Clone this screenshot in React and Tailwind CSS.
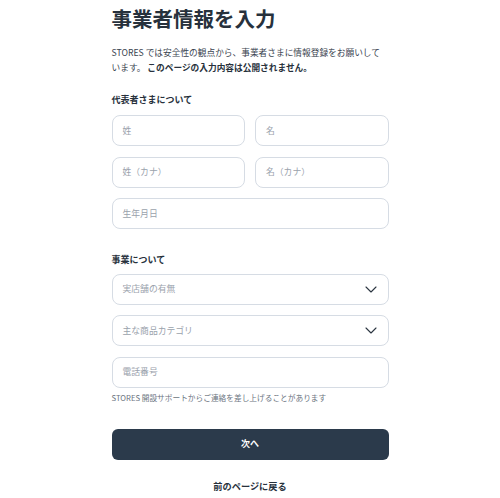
import React from "react";

const font = { fontFamily: '"Noto Sans CJK JP", "Noto Sans", sans-serif' };

function Field({ placeholder, className = "" }) {
  return (
    <div
      className={`h-[31px] rounded-[8px] border border-[#d6dce4] bg-white flex items-center pl-[10px] text-[8.8px] text-[#9aa2ac] ${className}`}
    >
      {placeholder}
    </div>
  );
}

function Select({ placeholder }) {
  return (
    <div className="h-[31px] rounded-[8px] border border-[#d6dce4] bg-white flex items-center justify-between pl-[10px] pr-[11px] text-[8.8px] text-[#9aa2ac]">
      <span>{placeholder}</span>
      <svg width="12" height="7" viewBox="0 0 12 7" fill="none">
        <path d="M1 1l5 5 5-5" stroke="#2b3540" strokeWidth="1.1" strokeLinecap="round" strokeLinejoin="round" />
      </svg>
    </div>
  );
}

export default function App() {
  return (
    <div className="w-[500px] h-[498px] bg-white overflow-hidden" style={font}>
      <div className="w-[277px] mx-auto flex flex-col pt-[6px]">
        <h1 className="text-[20.5px] leading-[24px] font-bold text-[#27313c]">
          事業者情報を入力
        </h1>
        <p className="mt-[14.5px] text-[8.7px] leading-[15px] text-[#3a4450] whitespace-nowrap">
          STORES では安全性の観点から、事業者さまに情報登録をお願いして
          <br />
          います。 <span className="font-bold text-[#27313c]">このページの入力内容は公開されません。</span>
        </p>
        <div className="mt-[18.5px] text-[9px] leading-[14px] font-bold text-[#27313c]">
          代表者さまについて
        </div>
        <div className="mt-[8px] flex flex-col gap-[10.5px]">
          <div className="flex gap-[10px]">
            <Field placeholder="姓" className="flex-1" />
            <Field placeholder="名" className="flex-1" />
          </div>
          <div className="flex gap-[10px]">
            <Field placeholder="姓（カナ）" className="flex-1" />
            <Field placeholder="名（カナ）" className="flex-1" />
          </div>
          <Field placeholder="生年月日" />
        </div>
        <div className="mt-[24px] text-[9px] leading-[14px] font-bold text-[#27313c]">
          事業について
        </div>
        <div className="mt-[6.5px] flex flex-col gap-[10.5px]">
          <Select placeholder="実店舗の有無" />
          <Select placeholder="主な商品カテゴリ" />
          <Field placeholder="電話番号" />
        </div>
        <div className="mt-[4px] text-[7.7px] leading-[12px] text-[#6b7480]">
          STORES 開設サポートからご連絡を差し上げることがあります
        </div>
        <button className="mt-[25px] h-[31px] rounded-[6px] bg-[#2b3a4b] text-white text-[9px] font-bold flex items-center justify-center">
          次へ
        </button>
        <div className="mt-[19px] text-center text-[9.2px] leading-[14px] font-bold text-[#27313c]">
          前のページに戻る
        </div>
      </div>
    </div>
  );
}
